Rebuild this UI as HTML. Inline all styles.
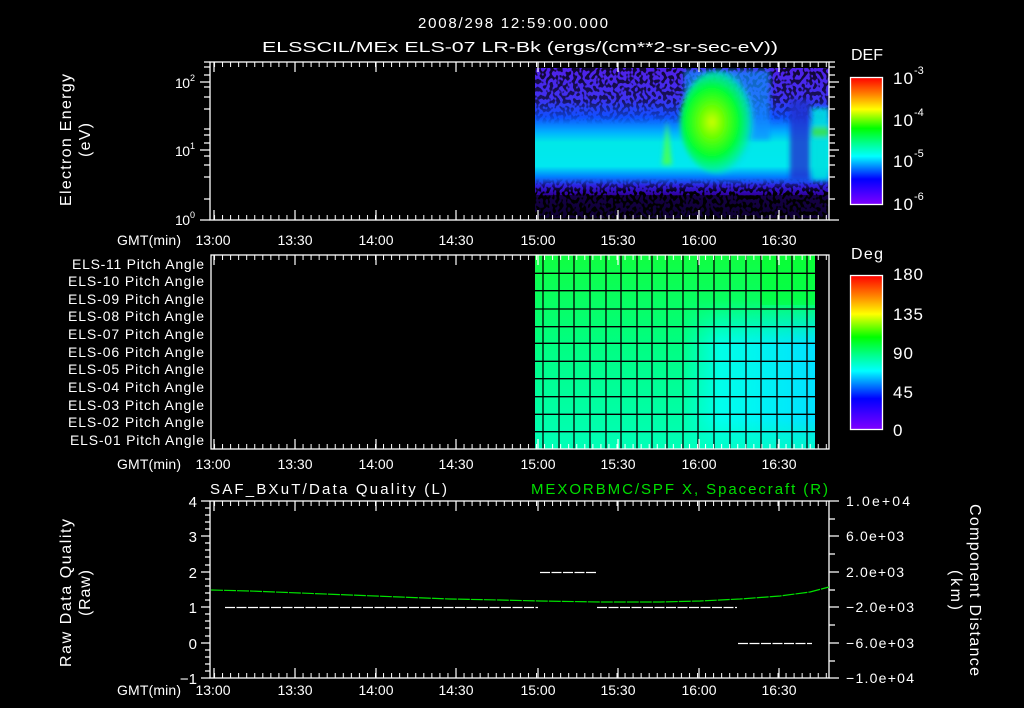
<!DOCTYPE html>
<html><head><meta charset="utf-8"><style>
html,body{margin:0;padding:0;background:#000;width:1024px;height:708px;overflow:hidden}
svg{display:block}
text{font-family:"Liberation Sans",sans-serif;fill:#fff}
</style></head><body>
<svg width="1024" height="708" viewBox="0 0 1024 708" xmlns="http://www.w3.org/2000/svg">
<defs>
<linearGradient id="cb" x1="0" y1="1" x2="0" y2="0">
<stop offset="0" stop-color="#8000ff"/><stop offset="0.2" stop-color="#0000ff"/>
<stop offset="0.38" stop-color="#00ffff"/><stop offset="0.48" stop-color="#00ff90"/>
<stop offset="0.6" stop-color="#00ff00"/><stop offset="0.75" stop-color="#ffff00"/>
<stop offset="0.87" stop-color="#ff8000"/><stop offset="1" stop-color="#ff0000"/>
</linearGradient>
<linearGradient id="sp" gradientUnits="userSpaceOnUse" x1="0" y1="68" x2="0" y2="217">
<stop offset="0" stop-color="#5020e8"/><stop offset="0.2" stop-color="#4030f0"/>
<stop offset="0.33" stop-color="#1050ff"/><stop offset="0.43" stop-color="#00b0ff"/>
<stop offset="0.5" stop-color="#00e8e8"/><stop offset="0.66" stop-color="#00e8f0"/>
<stop offset="0.73" stop-color="#0080ff"/><stop offset="0.79" stop-color="#3020e0"/>
<stop offset="0.85" stop-color="#3000a0"/><stop offset="1" stop-color="#200070"/>
</linearGradient>
<radialGradient id="blob" cx="0.4" cy="0.5" r="0.55">
<stop offset="0" stop-color="#d0ff00"/><stop offset="0.25" stop-color="#70ff00"/>
<stop offset="0.6" stop-color="#00ff30"/><stop offset="0.85" stop-color="#00f0a0" stop-opacity="0.8"/>
<stop offset="1" stop-color="#00d0ff" stop-opacity="0"/>
</radialGradient>
<linearGradient id="spm" gradientUnits="userSpaceOnUse" x1="0" y1="68" x2="0" y2="217">
<stop offset="0" stop-color="#fff" stop-opacity="0.8"/><stop offset="0.22" stop-color="#fff" stop-opacity="0.6"/>
<stop offset="0.38" stop-color="#fff" stop-opacity="0"/><stop offset="0.74" stop-color="#fff" stop-opacity="0"/>
<stop offset="0.84" stop-color="#fff" stop-opacity="1"/><stop offset="1" stop-color="#fff" stop-opacity="1"/>
</linearGradient>
<mask id="spmask"><rect x="535" y="68" width="294" height="150" fill="url(#spm)"/></mask>
<linearGradient id="pa" gradientUnits="userSpaceOnUse" x1="0" y1="255" x2="0" y2="449">
<stop offset="0" stop-color="#10ff40"/><stop offset="0.45" stop-color="#00ff80"/>
<stop offset="1" stop-color="#00ffb8"/>
</linearGradient>
<linearGradient id="pc" gradientUnits="userSpaceOnUse" x1="680" y1="0" x2="815" y2="0">
<stop offset="0" stop-color="#00ffff" stop-opacity="0"/><stop offset="0.3" stop-color="#00ffff" stop-opacity="0.8"/>
<stop offset="1" stop-color="#00e0ff" stop-opacity="1"/>
</linearGradient>
<linearGradient id="pcm" x1="0" y1="0" x2="0" y2="1">
<stop offset="0" stop-color="#fff" stop-opacity="0"/><stop offset="0.3" stop-color="#fff" stop-opacity="1"/>
<stop offset="0.8" stop-color="#fff" stop-opacity="1"/><stop offset="1" stop-color="#fff" stop-opacity="0.3"/>
</linearGradient>
<mask id="pm"><rect x="680" y="300" width="140" height="149" fill="url(#pcm)"/></mask>
<filter id="spk" x="0" y="0" width="1" height="1">
<feTurbulence type="fractalNoise" baseFrequency="0.3 0.25" numOctaves="1" seed="7"/>
<feColorMatrix type="matrix" values="0 0 0 0 0  0 0 0 0 0  0 0 0 0 0  0 0 0 -12 6.3"/>
</filter>
<filter id="bl"><feGaussianBlur stdDeviation="2.5"/></filter>
<clipPath id="c1"><rect x="535" y="68" width="294" height="150"/></clipPath>
<pattern id="tx" patternUnits="userSpaceOnUse" x="214" y="0" width="8.05" height="10"><rect x="0" y="0" width="1" height="10" fill="#fff"/></pattern>
</defs>

<text x="513" y="28" font-size="15" text-anchor="middle" textLength="190">2008/298 12:59:00.000</text>
<text x="262" y="52" font-size="15" textLength="516" lengthAdjust="spacingAndGlyphs">ELSSCIL/MEx ELS-07 LR-Bk  (ergs/(cm**2-sr-sec-eV))</text>

<g clip-path="url(#c1)">
<rect x="535" y="68" width="294" height="150" fill="url(#sp)"/>
<g mask="url(#spmask)"><rect x="535" y="68" width="294" height="150" fill="#000" filter="url(#spk)"/></g>
<rect x="535" y="195" width="294" height="23" fill="#000" opacity="0.55"/>
<g filter="url(#bl)">
<rect x="684" y="70" width="86" height="70" fill="#1090ff" opacity="0.7"/>
<ellipse cx="720" cy="122" rx="40" ry="52" fill="url(#blob)"/>
<path d="M662 165 L667 120 L672 165 Z" fill="#40ff60"/>
<rect x="790" y="100" width="20" height="80" fill="#2030d0" opacity="0.8"/>
<rect x="812" y="108" width="17" height="72" fill="#00e0e0" opacity="0.9"/>
<rect x="812" y="127" width="17" height="10" fill="#30e060"/>
</g>
</g>

<rect x="535" y="255" width="280" height="194" fill="url(#pa)"/>
<rect x="680" y="300" width="135" height="149" fill="url(#pc)" mask="url(#pm)"/>
<rect x="760" y="255" width="55" height="50" fill="#00ff20" opacity="0.35"/>
<g stroke="#000" stroke-width="1.3">
<path d="M535 273.3H815M535 290.7H815M535 309H815M535 326.7H815M535 343.3H815M535 361.3H815M535 378.7H815M535 396.7H815M535 414.3H815M535 431.7H815"/>
<path d="M543 255V449M559 255V449M574 255V449M590 255V449M606 255V449M621 255V449M637 255V449M652 255V449M667 255V449M683 255V449M698 255V449M714 255V449M730 255V449M746 255V449M761 255V449M777 255V449M792 255V449M807 255V449"/>
</g>

<g fill="none" stroke="#fff" stroke-width="1.3">
<rect x="210" y="62" width="619" height="158"/>
<rect x="211" y="255" width="618" height="194"/>
<rect x="210" y="501" width="619" height="177"/>
</g>
<rect x="210" y="62" width="619" height="5" fill="url(#tx)"/>
<rect x="210" y="215" width="619" height="5" fill="url(#tx)"/>
<rect x="211" y="255" width="618" height="5" fill="url(#tx)"/>
<rect x="211" y="444" width="618" height="5" fill="url(#tx)"/>
<rect x="210" y="501" width="619" height="5" fill="url(#tx)"/>
<rect x="210" y="673" width="619" height="5" fill="url(#tx)"/>
<g stroke="#fff" stroke-width="1.2">
<path d="M214 62v10M295 62v10M376 62v10M456 62v10M538 62v10M618 62v10M699 62v10M779 62v10M214 220v-10M295 220v-10M376 220v-10M456 220v-10M538 220v-10M618 220v-10M699 220v-10M779 220v-10"/>
<path d="M214 255v10M295 255v10M376 255v10M456 255v10M538 255v10M618 255v10M699 255v10M779 255v10M214 449v-10M295 449v-10M376 449v-10M456 449v-10M538 449v-10M618 449v-10M699 449v-10M779 449v-10"/>
<path d="M214 501v10M295 501v10M376 501v10M456 501v10M538 501v10M618 501v10M699 501v10M779 501v10M214 678v-10M295 678v-10M376 678v-10M456 678v-10M538 678v-10M618 678v-10M699 678v-10M779 678v-10"/>
<path d="M200 82h10M200 150h10M200 220h10M204 62h6M204 67h6M204 75h6M204 87h6M204 97h6M204 109h6M204 129h6M204 135h6M204 143h6M204 156h6M204 165h6M204 177h6M204 199h6"/>
<path d="M829 82h10M829 150h10M829 220h10M829 62h6M829 67h6M829 75h6M829 87h6M829 97h6M829 109h6M829 129h6M829 135h6M829 143h6M829 156h6M829 165h6M829 177h6M829 199h6"/>
<path d="M201 501h9M201 536h9M201 572h9M201 607h9M201 643h9M201 678h9M205 508h5M205 515h5M205 522h5M205 529h5M205 543h5M205 550h5M205 557h5M205 565h5M205 579h5M205 586h5M205 593h5M205 600h5M205 614h5M205 621h5M205 628h5M205 636h5M205 650h5M205 657h5M205 664h5M205 671h5"/>
<path d="M829 501h10M829 536h10M829 572h10M829 607h10M829 643h10M829 678h10M829 519h6M829 554h6M829 590h6M829 625h6M829 661h6"/>
</g>

<rect x="850.5" y="77.5" width="32" height="127" fill="url(#cb)" stroke="#fff" stroke-width="1.3"/>
<rect x="850.5" y="275.5" width="32" height="154" fill="url(#cb)" stroke="#fff" stroke-width="1.3"/>
<text x="851" y="60" font-size="16" textLength="32">DEF</text>
<text x="851" y="259" font-size="16" textLength="32">Deg</text>
<g font-size="17">
<text x="893" y="84" textLength="20">10</text><text x="914" y="74" font-size="11">-3</text>
<text x="893" y="126" textLength="20">10</text><text x="914" y="116" font-size="11">-4</text>
<text x="893" y="167" textLength="20">10</text><text x="914" y="157" font-size="11">-5</text>
<text x="893" y="210" textLength="20">10</text><text x="914" y="200" font-size="11">-6</text>
<text x="893" y="280" textLength="30">180</text><text x="893" y="320" textLength="30">135</text>
<text x="893" y="359" textLength="20">90</text><text x="893" y="398" textLength="20">45</text><text x="893" y="436">0</text>
</g>

<g font-size="14">
<text x="175" y="88" textLength="15">10</text><text x="190" y="81" font-size="9">2</text>
<text x="175" y="156" textLength="15">10</text><text x="190" y="149" font-size="9">1</text>
<text x="175" y="225" textLength="15">10</text><text x="190" y="218" font-size="9">0</text>
</g>
<text transform="translate(71,140) rotate(-90)" font-size="16" text-anchor="middle" textLength="132">Electron Energy</text>
<text transform="translate(90,140) rotate(-90)" font-size="16" text-anchor="middle" textLength="34">(eV)</text>

<g font-size="14" text-anchor="middle">
<text x="149" y="245" textLength="64">GMT(min)</text><text x="149" y="469" textLength="64">GMT(min)</text><text x="149" y="695" textLength="64">GMT(min)</text>
<text x="213" y="245" textLength="35">13:00</text><text x="295" y="245" textLength="35">13:30</text><text x="376" y="245" textLength="35">14:00</text><text x="456" y="245" textLength="35">14:30</text><text x="538" y="245" textLength="35">15:00</text><text x="618" y="245" textLength="35">15:30</text><text x="699" y="245" textLength="35">16:00</text><text x="779" y="245" textLength="35">16:30</text>
<text x="213" y="469" textLength="35">13:00</text><text x="295" y="469" textLength="35">13:30</text><text x="376" y="469" textLength="35">14:00</text><text x="456" y="469" textLength="35">14:30</text><text x="538" y="469" textLength="35">15:00</text><text x="618" y="469" textLength="35">15:30</text><text x="699" y="469" textLength="35">16:00</text><text x="779" y="469" textLength="35">16:30</text>
<text x="213" y="695" textLength="35">13:00</text><text x="295" y="695" textLength="35">13:30</text><text x="376" y="695" textLength="35">14:00</text><text x="456" y="695" textLength="35">14:30</text><text x="538" y="695" textLength="35">15:00</text><text x="618" y="695" textLength="35">15:30</text><text x="699" y="695" textLength="35">16:00</text><text x="779" y="695" textLength="35">16:30</text>
</g>

<g font-size="14">
<text x="72" y="269" textLength="132">ELS-11 Pitch Angle</text><text x="68" y="286" textLength="136">ELS-10 Pitch Angle</text>
<text x="68" y="304" textLength="136">ELS-09 Pitch Angle</text><text x="68" y="321" textLength="136">ELS-08 Pitch Angle</text>
<text x="68" y="339" textLength="136">ELS-07 Pitch Angle</text><text x="68" y="357" textLength="136">ELS-06 Pitch Angle</text>
<text x="68" y="374" textLength="136">ELS-05 Pitch Angle</text><text x="68" y="392" textLength="136">ELS-04 Pitch Angle</text>
<text x="68" y="410" textLength="136">ELS-03 Pitch Angle</text><text x="68" y="427" textLength="136">ELS-02 Pitch Angle</text>
<text x="70" y="445" textLength="134">ELS-01 Pitch Angle</text>
</g>

<text x="210" y="494" font-size="15" textLength="237">SAF_BXuT/Data Quality (L)</text>
<text x="531" y="494" font-size="15" textLength="297" style="fill:#00e000">MEXORBMC/SPF X, Spacecraft (R)</text>
<g font-size="15" text-anchor="end">
<text x="197" y="507">4</text><text x="197" y="542">3</text><text x="197" y="578">2</text>
<text x="197" y="613">1</text><text x="197" y="649">0</text><text x="197" y="684">−1</text>
</g>
<g font-size="14">
<text x="846" y="506" textLength="64">1.0e+04</text><text x="846" y="541" textLength="58">6.0e+03</text><text x="846" y="577" textLength="58">2.0e+03</text>
<text x="846" y="612" textLength="68">−2.0e+03</text><text x="846" y="648" textLength="68">−6.0e+03</text><text x="846" y="683" textLength="68">−1.0e+04</text>
</g>
<text transform="translate(71,593) rotate(-90)" font-size="16" text-anchor="middle" textLength="148">Raw Data Quality</text>
<text transform="translate(90,593) rotate(-90)" font-size="16" text-anchor="middle" textLength="46">(Raw)</text>
<text transform="translate(970,590) rotate(90)" font-size="16" text-anchor="middle" textLength="172">Component Distance</text>
<text transform="translate(951,590) rotate(90)" font-size="16" text-anchor="middle" textLength="40">(km)</text>

<path d="M211 590 L250 591 L300 593 L350 595 L400 597 L450 599 L500 600 L540 601 L600 602 L660 602 L700 601 L740 599 L780 596 L810 592 L829 587" fill="none" stroke="#00e000" stroke-width="1.2" stroke-dasharray="12 1"/>
<g stroke="#fff" stroke-width="1.2" stroke-dasharray="10 1.5" fill="none">
<path d="M225 607.5H538"/><path d="M540 572.5H596"/><path d="M597 607.5H737"/><path d="M738 643.5H812"/>
</g>
</svg>
</body></html>
